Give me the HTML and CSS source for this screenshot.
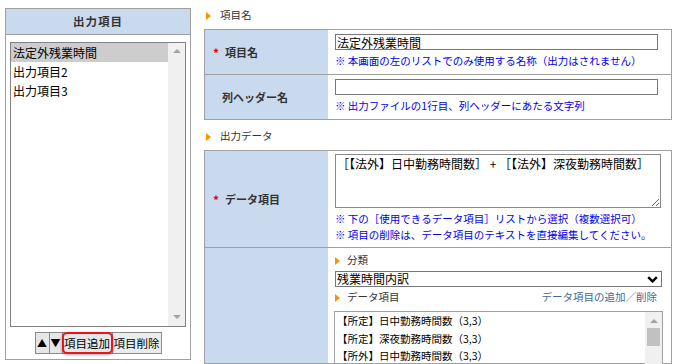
FILE: index.html
```html
<!DOCTYPE html>
<html lang="ja">
<head>
<meta charset="utf-8">
<title>出力項目</title>
<link rel="stylesheet" href="styles.css">
</head>
<body>
<div class="page">
  <div class="side">
    <div class="side-head">出力項目</div>
    <div class="side-body">
      <div class="side-list">
        <div class="list-items">
          <div class="item selected">法定外残業時間</div>
          <div class="item">出力項目2</div>
          <div class="item">出力項目3</div>
        </div>
        <div class="vscroll">
          <span class="sarrow up"></span>
          <span class="sarrow down"></span>
        </div>
      </div>
      <div class="btns">
        <button class="btn b-up">▲</button>
        <button class="btn b-down">▼</button>
        <button class="btn b-add hl">項目追加</button>
        <button class="btn b-del">項目削除</button>
      </div>
    </div>
  </div>

  <div class="main">
    <div class="sec-head"><span class="tri"></span>項目名</div>
    <div class="form">
      <div class="row">
        <div class="lbl req"><span class="req-mark">*</span>項目名</div>
        <div class="val">
          <input class="txt" type="text" value="法定外残業時間">
          <div class="note">※ 本画面の左のリストでのみ使用する名称（出力はされません）</div>
        </div>
      </div>
      <div class="row">
        <div class="lbl">列ヘッダー名</div>
        <div class="val">
          <input class="txt" type="text" value="">
          <div class="note">※ 出力ファイルの1行目、列ヘッダーにあたる文字列</div>
        </div>
      </div>
    </div>

    <div class="sec-head second"><span class="tri"></span>出力データ</div>
    <div class="form">
      <div class="row">
        <div class="lbl req"><span class="req-mark">*</span>データ項目</div>
        <div class="val val-data">
          <textarea class="area">［【法外】日中勤務時間数］ + ［【法外】深夜勤務時間数］</textarea>
          <div class="note">※ 下の［使用できるデータ項目］リストから選択（複数選択可）</div>
          <div class="note nm">※ 項目の削除は、データ項目のテキストを直接編集してください。</div>
        </div>
      </div>
      <div class="row">
        <div class="lbl"></div>
        <div class="val val-pick">
          <div class="sub-head"><span class="tri small"></span>分類</div>
          <div class="sel">
            <span>残業時間内訳</span>
            <svg class="chev" width="11" height="7" viewBox="0 0 11 7"><polyline points="1.2,1.2 5.5,5.4 9.8,1.2" fill="none" stroke="#000" stroke-width="2.4"/></svg>
          </div>
          <div class="sub-row">
            <div class="sub-head"><span class="tri small"></span>データ項目</div>
            <span class="link">データ項目の追加／削除</span>
          </div>
          <div class="dlist">
            <div class="dlist-items">
              <div class="ditem">【所定】日中勤務時間数（3,3）</div>
              <div class="ditem">【所定】深夜勤務時間数（3,3）</div>
              <div class="ditem">【所外】日中勤務時間数（3,3）</div>
            </div>
            <div class="dscroll">
              <span class="sarrow up"></span>
              <span class="thumb"></span>
            </div>
          </div>
        </div>
      </div>
    </div>
  </div>
</div>
</body>
</html>
```

FILE: styles.css
```css
* { box-sizing: border-box; }
html { overflow: hidden; }
body {
  margin: 0;
  font-family: "Noto Sans CJK JP", "Noto Sans", sans-serif;
  color: #333;
  background: #fff;
}
.page {
  display: flex;
  align-items: flex-start;
  gap: 13px;
  padding: 8px 0 0 5px;
}

/* left panel */
.side {
  width: 186px;
  height: 352px;
  border: 1px solid #a0a0a0;
  display: flex;
  flex-direction: column;
}
.side-head {
  height: 26px;
  background: #c9daef;
  border-bottom: 1px solid #a0a0a0;
  font-size: 11.5px;
  font-weight: bold;
  text-align: center;
  line-height: 25px;
  letter-spacing: 1px;
  color: #333;
}
.side-body {
  flex: 1;
  padding: 7px 4px 5px;
  display: flex;
  flex-direction: column;
}
.side-list {
  height: 285px;
  border: 1px solid #828282;
  display: flex;
}
.list-items { flex: 1; }
.item {
  height: 19px;
  line-height: 19px;
  font-size: 12px;
  color: #000;
  padding-left: 2px;
  white-space: nowrap;
}
.item.selected { background: #cdcdcd; }
.vscroll {
  width: 17px;
  background: #f0f0f0;
  display: flex;
  flex-direction: column;
  justify-content: space-between;
  align-items: center;
  padding: 6px 0 7px;
}
.sarrow {
  width: 0;
  height: 0;
  border-left: 4px solid transparent;
  border-right: 4px solid transparent;
}
.sarrow.up { border-bottom: 4px solid #a3a3a3; }
.sarrow.down { border-top: 4px solid #a3a3a3; }

.btns {
  margin-top: 5px;
  display: flex;
  justify-content: center;
}
.btn {
  height: 22px;
  border: 1px solid #8a8a8a;
  background: #e6e6e6;
  font-family: "Noto Sans CJK JP", sans-serif;
  font-size: 11.5px;
  color: #000;
  padding: 0;
  margin: 0 0 0 -1px;
  line-height: 20px;
  border-radius: 0;
}
.b-up { width: 15px; margin-left: 0; font-size: 10px; }
.b-down { width: 14px; font-size: 10px; }
.b-add { width: 51px; }
.b-del { width: 50px; background: #ececec; }
.hl { position: relative; z-index: 1; }
.hl::after {
  content: "";
  position: absolute;
  left: -1px;
  top: -1px;
  right: -1px;
  bottom: -1px;
  border: 2px solid #e8141e;
  border-radius: 5px;
  box-shadow: 0 1px 3px rgba(0, 0, 0, 0.35);
}

/* main */
.main { width: 468px; }
.sec-head {
  display: flex;
  align-items: center;
  height: 14px;
  line-height: 14px;
  font-size: 10.5px;
  color: #333;
  padding-left: 2px;
  margin-bottom: 7px;
}
.sec-head.second { margin-top: 9px; }
.tri {
  width: 0;
  height: 0;
  border-left: 5px solid #f39800;
  border-top: 4px solid transparent;
  border-bottom: 4px solid transparent;
  margin-right: 9px;
  margin-top: 2px;
}
.tri.small { margin-right: 7px; }

.form { border: 1px solid #a0a0a0; }
.row {
  display: grid;
  grid-template-columns: 123px 1fr;
}
.row + .row { border-top: 1px solid #a0a0a0; }
.lbl {
  background: #c9daef;
  display: flex;
  align-items: center;
  font-size: 11px;
  font-weight: bold;
  color: #333;
  padding-left: 17px;
  white-space: nowrap;
}
.lbl.req { padding-left: 8px; }
.req-mark {
  color: #e60012;
  width: 12px;
  font-size: 12px;
}
.val { padding: 4px 0 5px 7px; }
.txt {
  display: block;
  width: 323px;
  height: 16px;
  border: 1px solid #767676;
  font-family: "Noto Sans CJK JP", sans-serif;
  font-size: 12px;
  line-height: 14px;
  padding: 0 1px;
  color: #000;
  border-radius: 0;
  outline: none;
}
.note {
  font-size: 10.5px;
  color: #0000ee;
  line-height: 16px;
  margin-top: 3px;
  white-space: nowrap;
}
.note.nm { margin-top: 0; }
.val-data { padding: 3px 0 4px 7px; }
.area {
  display: block;
  width: 326px;
  height: 54px;
  border: 1px solid #8a8a8a;
  font-family: "Noto Sans CJK JP", sans-serif;
  font-size: 12px;
  line-height: 16px;
  padding: 1px 1px;
  color: #000;
  margin: 0;
  border-radius: 0;
}
.val-pick { padding: 5px 0 0 7px; height: 115px; }
.sub-head {
  display: flex;
  align-items: center;
  height: 14px;
  line-height: 14px;
  font-size: 10.5px;
  color: #333;
}
.sel {
  margin-top: 4px;
  width: 327px;
  height: 16px;
  border: 1px solid #767676;
  display: flex;
  align-items: center;
  justify-content: space-between;
  font-size: 12px;
  line-height: 14px;
  padding: 0 3px 0 1px;
  color: #000;
}
.chev { display: block; }
.sub-row {
  margin-top: 3px;
  width: 322px;
  display: flex;
  justify-content: space-between;
  align-items: center;
}
.link {
  color: #3d6a9e;
  font-size: 10.5px;
  line-height: 14px;
}
.dlist {
  margin-top: 7px;
  margin-left: -1px;
  width: 329px;
  height: 70px;
  border: 1px solid #a0a0a0;
  display: flex;
}
.dlist-items { flex: 1; }
.ditem {
  font-size: 10.5px;
  line-height: 17.5px;
  color: #000;
  padding-left: 2px;
  white-space: nowrap;
}
.dscroll {
  width: 17px;
  background: #f0f0f0;
  display: flex;
  flex-direction: column;
  align-items: center;
  padding-top: 7px;
}
.thumb {
  margin-top: 5px;
  width: 13px;
  height: 18px;
  background: #c1c1c1;
}
```
